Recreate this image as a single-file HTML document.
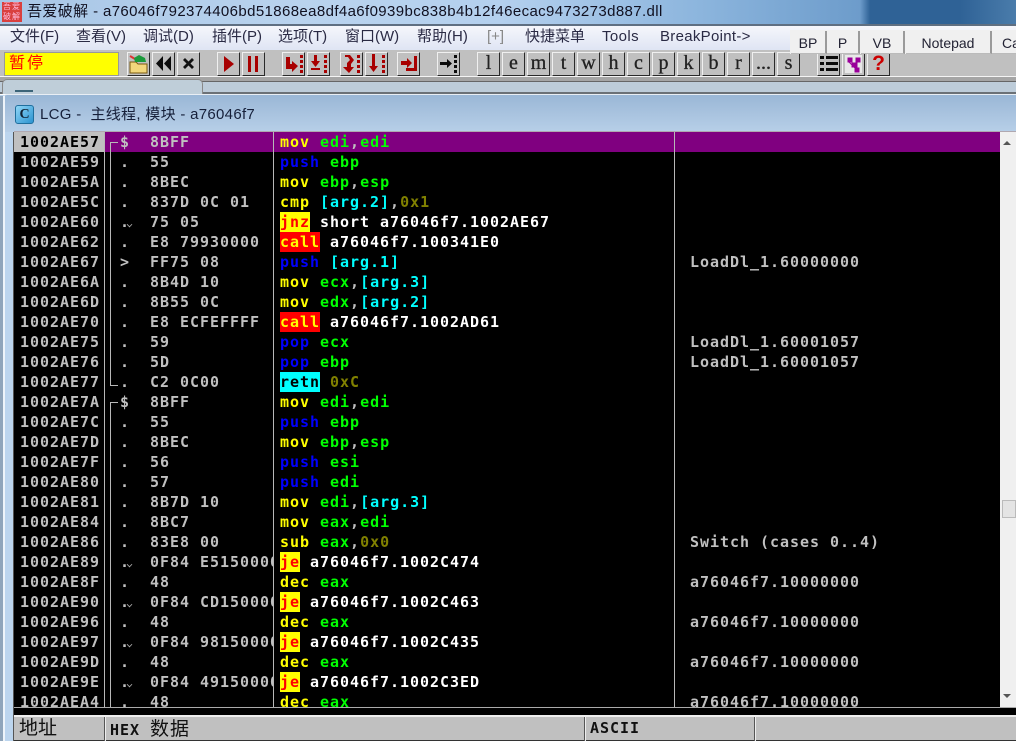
<!DOCTYPE html>
<html><head><meta charset="utf-8"><style>
html,body{margin:0;padding:0;background:#000}
#p{position:relative;width:1016px;height:741px;overflow:hidden;background:#bcd5ee;font-family:"Liberation Sans","Noto Sans CJK SC",sans-serif}
#p>div,#p>span{position:absolute}
.t{font-size:15px;white-space:pre;line-height:18px;color:#1c1c30}
.m{position:absolute;top:28px;font-size:15px;line-height:18px;color:#2a2a44;white-space:pre}
.b{position:absolute;top:52px;width:21px;height:22px;background:#c0c0c0;border:1px solid;border-color:#f0f0f0 #2a2a2a #2a2a2a #f0f0f0;font:20px/21px "Liberation Serif",serif;-webkit-text-stroke:.3px #222;text-align:center;color:#222}
.b svg{position:absolute;left:0;top:0}
.f{position:absolute;top:31px;height:22px;background:#f0f0f0;border-right:2px solid #9a9a9a;border-bottom:1px solid #bbb;font-size:14px;line-height:24px;text-align:center;color:#223}
#g{left:14px;top:132px;width:986px;height:575px;background:#000;overflow:hidden;font:bold 15px/20px "DejaVu Sans Mono","Liberation Mono",monospace;letter-spacing:.97px;color:#c0c0c0}
.r{position:relative;height:20px;white-space:pre}
.r span.a,.r span.h,.r span.d,.r span.c,.r span.k{position:absolute;top:0}
.a{left:6px}.k{left:106px}.h{left:136px;width:123px;overflow:hidden}.d{left:266px}.c{left:676px}
.y{color:#ff0}.l{color:#00f}.g{color:#0f0}.n{color:#0ff}.o{color:#808000}.w{color:#fff}
.J,.C,.R{display:inline-block;height:20px;vertical-align:top}
.J{background:#ff0;color:#f00}.C{background:#f00;color:#ff0}.R{background:#0ff;color:#000}
.v{position:absolute;background:#b8b8b8}
.cv{position:absolute;left:113px;margin-top:10px;width:4px;height:4px;border:solid #aaa;border-width:0 1px 1px 0;transform:rotate(45deg) scale(.8)}
</style></head><body><div id="p">

<div style="left:0;top:0;width:1016px;height:24px;background:linear-gradient(90deg,#a8c6e6 0,#b9d3ee 300px,#b4d0ee 500px,#8cb5dd 700px,#6d9ccb 860px,#2f6296 870px,#2f6296 960px,#4a7cab 1016px)"></div>
<div style="left:2px;top:2px;width:20px;height:20px;background:#d9403f;color:#fbd;font-size:8px;line-height:10px;text-align:center;letter-spacing:1px">吾爱<br>破解</div>
<div class="t" style="left:27px;top:3px;color:#101020;letter-spacing:.38px">吾爱破解 - a76046f792374406bd51868ea8df4a6f0939bc838b4b12f46ecac9473273d887.dll</div>

<div style="left:0;top:24px;width:1016px;height:27px;background:linear-gradient(#f6f7fc,#dde3f3);border-top:1px solid #667"></div>
<div style="left:0;top:24px;width:1016px;height:2px;background:#5f6f82"></div>
<span class="m" style="left:10px">文件(F)</span>
<span class="m" style="left:76px">查看(V)</span>
<span class="m" style="left:143px">调试(D)</span>
<span class="m" style="left:212px">插件(P)</span>
<span class="m" style="left:278px">选项(T)</span>
<span class="m" style="left:345px">窗口(W)</span>
<span class="m" style="left:417px">帮助(H)</span>
<span class="m" style="left:487px;color:#888">[+]</span>
<span class="m" style="left:525px">快捷菜单</span>
<span class="m" style="left:602px;letter-spacing:.4px">Tools</span>
<span class="m" style="left:660px;letter-spacing:.3px">BreakPoint-&gt;</span>

<div style="left:0;top:50px;width:1016px;height:27px;background:#c0c0c0"></div>
<div style="left:4px;top:52px;width:115px;height:24px;background:#ff0;box-sizing:border-box;border:1px solid #999;color:#f00;font-size:16px;line-height:22px;padding-left:4px;letter-spacing:2px">暂停</div>

<div class="b" style="left:127px"><svg width="21" height="22"><path d="M2 9h6l2 2h9v9H2z" fill="#f2d77c" stroke="#7a5a10"/><path d="M2 3l5 3" stroke="#d33" stroke-width="2"/><path d="M6 5l5-3 6 3 1 4H7z" fill="#1a9a3a"/></svg></div>
<div class="b" style="left:152px"><svg width="21" height="22"><path d="M10 3v15L3 10.500zM18 3v15l-7-7.500z" fill="#0c0c0c"/></svg></div>
<div class="b" style="left:177px"><svg width="21" height="22"><path d="M6 6l9 9M15 6l-9 9" stroke="#111" stroke-width="2.800"/></svg></div>
<div class="b" style="left:217px"><svg width="21" height="22"><path d="M6 3l10 8-10 8z" fill="#a80000"/></svg></div>
<div class="b" style="left:242px"><svg width="21" height="22"><path d="M5 3h3v16H5zM12 3h3v16h-3z" fill="#a80000"/></svg></div>
<div class="b" style="left:282px"><svg width="21" height="22"><path d="M3 4h4v7h2V8l6 5-6 6v-3H3z" fill="#a80000"/><path d="M17 2h3v3h-3zM17 7h3v3h-3zM17 12h3v3h-3zM17 17h3v3h-3z" fill="#a80000"/></svg></div>
<div class="b" style="left:307px"><svg width="21" height="22"><path d="M6 2h3v6h3l-4.500 6L3 8h3zM3 15h9v2H3z" fill="#a80000"/><path d="M16 2h3v3h-3zM16 7h3v3h-3zM16 12h3v3h-3zM16 17h3v3h-3z" fill="#a80000"/></svg></div>
<div class="b" style="left:340px"><svg width="21" height="22"><path d="M4 2h5l4 5-3 4v3h3l-5 6-6-6h4v-4l3-3-2-3H4z" fill="#a80000"/><path d="M16 2h3v3h-3zM16 7h3v3h-3zM16 12h3v3h-3zM16 17h3v3h-3z" fill="#a80000"/></svg></div>
<div class="b" style="left:365px"><svg width="21" height="22"><path d="M6 1h3v12h3l-4.500 6L3 13h3z" fill="#a80000"/><path d="M16 2h3v3h-3zM16 7h3v3h-3zM16 12h3v3h-3zM16 17h3v3h-3z" fill="#a80000"/></svg></div>
<div class="b" style="left:397px"><svg width="21" height="22"><path d="M3 8h6V5l5 5-5 5v-3H3z" fill="#a80000"/><path d="M16 3h3v15H8v-3h8z" fill="#a80000"/></svg></div>
<div class="b" style="left:437px"><svg width="21" height="22"><path d="M2 9h7V6l5 4.500L9 15v-3H2z" fill="#0c0c0c"/><path d="M16 2h3v3h-3zM16 7h3v3h-3zM16 12h3v3h-3zM16 17h3v3h-3z" fill="#0c0c0c"/></svg></div>
<div class="b" style="left:477px">l</div>
<div class="b" style="left:502px">e</div>
<div class="b" style="left:527px">m</div>
<div class="b" style="left:552px">t</div>
<div class="b" style="left:577px">w</div>
<div class="b" style="left:602px">h</div>
<div class="b" style="left:627px">c</div>
<div class="b" style="left:652px">p</div>
<div class="b" style="left:677px">k</div>
<div class="b" style="left:702px">b</div>
<div class="b" style="left:727px">r</div>
<div class="b" style="left:752px">...</div>
<div class="b" style="left:777px">s</div>
<div class="b" style="left:817px"><svg width="21" height="22"><path d="M2 3h4v3H2zM8 3h12v3H8zM2 9h4v3H2zM8 9h12v3H8zM2 15h4v3H2zM8 15h12v3H8z" fill="#0c0c0c"/></svg></div>
<div class="b" style="left:842px"><svg width="21" height="22"><path d="M2 2h17v18H2z" fill="#e8e8e8"/><path d="M5 5h4v4H5zM13 5h4v4h-4zM9 10h5v4H9zM12 15h4v4h-4zM5 8l9 9M16 8l-7 5" fill="#909" stroke="#909"/></svg></div>
<div class="b" style="left:867px;color:#c00;font:bold 21px/21px 'Liberation Sans',sans-serif;-webkit-text-stroke:0">?</div>

<div style="left:0;top:76px;width:1016px;height:1px;background:#f4f4f4"></div>
<div style="left:0;top:77px;width:1016px;height:5px;background:#a5a5a5;border-bottom:1px solid #666;box-sizing:border-box"></div>
<div style="left:0;top:82px;width:1016px;height:11px;background:#bdccd9"></div>
<div style="left:0;top:92px;width:1016px;height:2px;background:#6b7176"></div>
<div style="left:0;top:94px;width:1016px;height:1px;background:#fff"></div>
<div style="left:2px;top:79px;width:201px;height:15px;background:#bfced9;border:1px solid #888;border-bottom:0;border-radius:5px 5px 0 0;box-sizing:border-box"></div>
<div style="left:15px;top:90px;width:18px;height:2px;background:#3c6478"></div>

<div style="left:790px;top:30px;width:226px;height:24px;background:#f0f0f0"></div>
<div class="f" style="left:791px;width:34px">BP</div>
<div class="f" style="left:827px;width:31px">P</div>
<div class="f" style="left:861px;width:42px">VB</div>
<div class="f" style="left:906px;width:84px">Notepad</div>
<div class="f" style="left:992px;width:40px;text-align:left;padding-left:10px">Ca</div>

<div style="left:3px;top:94px;width:1013px;height:38px;background:linear-gradient(#9ab7d6,#b7cfe8);border-top:1px solid #e9eef4;box-sizing:border-box;border-radius:4px 0 0 0"></div>
<div style="left:15px;top:105px;width:17px;height:17px;background:linear-gradient(135deg,#8fd6f6,#2b93d0);border:1px solid #1f6f9e;border-radius:3px;color:#123;font:bold 14px/17px 'Liberation Serif',serif;text-align:center">C</div>
<div class="t" style="left:40px;top:106px;color:#16203a;letter-spacing:.3px">LCG -  主线程, 模块 - a76046f7</div>

<div style="left:0;top:96px;width:3px;height:645px;background:#8fa5bb"></div>
<div style="left:3px;top:96px;width:2px;height:645px;background:#eef4fa"></div>
<div style="left:13px;top:132px;width:1px;height:609px;background:#555"></div>
<div style="left:14px;top:131px;width:1002px;height:1px;background:#b0a8b0"></div>

<div id="g">
<div class="r" style="background:#800080"><span class="a" style="background:#c0c0c0;color:#000;left:0;width:90px;height:20px;padding-left:6px;box-sizing:border-box">1002AE57</span><span class="k">$</span><span class="h">8BFF</span><span class="d"><b class="y">mov</b> <b class="g">edi</b>,<b class="g">edi</b></span></div>
<div class="r"><span class="a">1002AE59</span><span class="k">.</span><span class="h">55</span><span class="d"><b class="l">push</b> <b class="g">ebp</b></span></div>
<div class="r"><span class="a">1002AE5A</span><span class="k">.</span><span class="h">8BEC</span><span class="d"><b class="y">mov</b> <b class="g">ebp</b>,<b class="g">esp</b></span></div>
<div class="r"><span class="a">1002AE5C</span><span class="k">.</span><span class="h">837D 0C 01</span><span class="d"><b class="y">cmp</b> <b class="n">[arg.2]</b>,<b class="o">0x1</b></span></div>
<div class="r"><span class="a">1002AE60</span><span class="k">.</span><i class="cv"></i><span class="h">75 05</span><span class="d"><b class="J">jnz</b> <b class="w">short a76046f7.1002AE67</b></span></div>
<div class="r"><span class="a">1002AE62</span><span class="k">.</span><span class="h">E8 79930000</span><span class="d"><b class="C">call</b> <b class="w">a76046f7.100341E0</b></span></div>
<div class="r"><span class="a">1002AE67</span><span class="k">&gt;</span><span class="h">FF75 08</span><span class="d"><b class="l">push</b> <b class="n">[arg.1]</b></span><span class="c">LoadDl_1.60000000</span></div>
<div class="r"><span class="a">1002AE6A</span><span class="k">.</span><span class="h">8B4D 10</span><span class="d"><b class="y">mov</b> <b class="g">ecx</b>,<b class="n">[arg.3]</b></span></div>
<div class="r"><span class="a">1002AE6D</span><span class="k">.</span><span class="h">8B55 0C</span><span class="d"><b class="y">mov</b> <b class="g">edx</b>,<b class="n">[arg.2]</b></span></div>
<div class="r"><span class="a">1002AE70</span><span class="k">.</span><span class="h">E8 ECFEFFFF</span><span class="d"><b class="C">call</b> <b class="w">a76046f7.1002AD61</b></span></div>
<div class="r"><span class="a">1002AE75</span><span class="k">.</span><span class="h">59</span><span class="d"><b class="l">pop</b> <b class="g">ecx</b></span><span class="c">LoadDl_1.60001057</span></div>
<div class="r"><span class="a">1002AE76</span><span class="k">.</span><span class="h">5D</span><span class="d"><b class="l">pop</b> <b class="g">ebp</b></span><span class="c">LoadDl_1.60001057</span></div>
<div class="r"><span class="a">1002AE77</span><span class="k">.</span><span class="h">C2 0C00</span><span class="d"><b class="R">retn</b> <b class="o">0xC</b></span></div>
<div class="r"><span class="a">1002AE7A</span><span class="k">$</span><span class="h">8BFF</span><span class="d"><b class="y">mov</b> <b class="g">edi</b>,<b class="g">edi</b></span></div>
<div class="r"><span class="a">1002AE7C</span><span class="k">.</span><span class="h">55</span><span class="d"><b class="l">push</b> <b class="g">ebp</b></span></div>
<div class="r"><span class="a">1002AE7D</span><span class="k">.</span><span class="h">8BEC</span><span class="d"><b class="y">mov</b> <b class="g">ebp</b>,<b class="g">esp</b></span></div>
<div class="r"><span class="a">1002AE7F</span><span class="k">.</span><span class="h">56</span><span class="d"><b class="l">push</b> <b class="g">esi</b></span></div>
<div class="r"><span class="a">1002AE80</span><span class="k">.</span><span class="h">57</span><span class="d"><b class="l">push</b> <b class="g">edi</b></span></div>
<div class="r"><span class="a">1002AE81</span><span class="k">.</span><span class="h">8B7D 10</span><span class="d"><b class="y">mov</b> <b class="g">edi</b>,<b class="n">[arg.3]</b></span></div>
<div class="r"><span class="a">1002AE84</span><span class="k">.</span><span class="h">8BC7</span><span class="d"><b class="y">mov</b> <b class="g">eax</b>,<b class="g">edi</b></span></div>
<div class="r"><span class="a">1002AE86</span><span class="k">.</span><span class="h">83E8 00</span><span class="d"><b class="y">sub</b> <b class="g">eax</b>,<b class="o">0x0</b></span><span class="c">Switch (cases 0..4)</span></div>
<div class="r"><span class="a">1002AE89</span><span class="k">.</span><i class="cv"></i><span class="h">0F84 E5150000</span><span class="d"><b class="J">je</b> <b class="w">a76046f7.1002C474</b></span></div>
<div class="r"><span class="a">1002AE8F</span><span class="k">.</span><span class="h">48</span><span class="d"><b class="y">dec</b> <b class="g">eax</b></span><span class="c">a76046f7.10000000</span></div>
<div class="r"><span class="a">1002AE90</span><span class="k">.</span><i class="cv"></i><span class="h">0F84 CD150000</span><span class="d"><b class="J">je</b> <b class="w">a76046f7.1002C463</b></span></div>
<div class="r"><span class="a">1002AE96</span><span class="k">.</span><span class="h">48</span><span class="d"><b class="y">dec</b> <b class="g">eax</b></span><span class="c">a76046f7.10000000</span></div>
<div class="r"><span class="a">1002AE97</span><span class="k">.</span><i class="cv"></i><span class="h">0F84 98150000</span><span class="d"><b class="J">je</b> <b class="w">a76046f7.1002C435</b></span></div>
<div class="r"><span class="a">1002AE9D</span><span class="k">.</span><span class="h">48</span><span class="d"><b class="y">dec</b> <b class="g">eax</b></span><span class="c">a76046f7.10000000</span></div>
<div class="r"><span class="a">1002AE9E</span><span class="k">.</span><i class="cv"></i><span class="h">0F84 49150000</span><span class="d"><b class="J">je</b> <b class="w">a76046f7.1002C3ED</b></span></div>
<div class="r"><span class="a">1002AEA4</span><span class="k">.</span><span class="h">48</span><span class="d"><b class="y">dec</b> <b class="g">eax</b></span><span class="c">a76046f7.10000000</span></div>
<i class="v" style="left:90px;top:0;width:1px;height:575px"></i>
<i class="v" style="left:96px;top:10px;width:1px;height:244px"></i>
<i class="v" style="left:96px;top:10px;width:8px;height:1px"></i>
<i class="v" style="left:96px;top:253px;width:8px;height:1px"></i>
<i class="v" style="left:96px;top:270px;width:1px;height:305px"></i>
<i class="v" style="left:96px;top:270px;width:8px;height:1px"></i>
<i class="v" style="left:259px;top:0;width:1px;height:575px"></i>
<i class="v" style="left:660px;top:0;width:1px;height:575px"></i>
</div>

<div style="left:1000px;top:132px;width:16px;height:576px;background:#f0f0f0"></div>
<div style="left:1003px;top:141px;width:0;height:0;border:4px solid transparent;border-top:0;border-bottom:4px solid #555"></div>
<div style="left:1003px;top:694px;width:0;height:0;border:4px solid transparent;border-bottom:0;border-top:4px solid #555"></div>
<div style="left:1002px;top:500px;width:14px;height:18px;background:#e4e4e4;border:1px solid #bbb;box-sizing:border-box"></div>

<div style="left:14px;top:707px;width:1002px;height:1px;background:#aaa"></div>
<div style="left:14px;top:708px;width:1002px;height:7px;background:#000"></div>
<div style="left:14px;top:715px;width:1002px;height:26px;background:#c0c0c0;border-top:2px solid #eee;box-sizing:border-box"></div>
<div style="left:14px;top:740px;width:1002px;height:1px;background:#333"></div>
<div style="left:19px;top:717px;font-size:19px;line-height:24px;color:#111">地址</div>
<div style="left:104px;top:717px;width:1px;height:24px;background:#555;border-right:1px solid #eee"></div>
<div style="left:110px;top:716px;font:bold 15px/24px 'DejaVu Sans Mono',monospace;letter-spacing:.97px;color:#111;white-space:pre">HEX <span style="font:19px/24px 'Noto Sans CJK SC',sans-serif">数据</span></div>
<div style="left:584px;top:717px;width:1px;height:24px;background:#555;border-right:1px solid #eee"></div>
<div style="left:590px;top:716px;font:bold 15px/24px 'DejaVu Sans Mono',monospace;letter-spacing:.97px;color:#111">ASCII</div>
<div style="left:754px;top:717px;width:1px;height:24px;background:#555;border-right:1px solid #eee"></div>
</div></body></html>
